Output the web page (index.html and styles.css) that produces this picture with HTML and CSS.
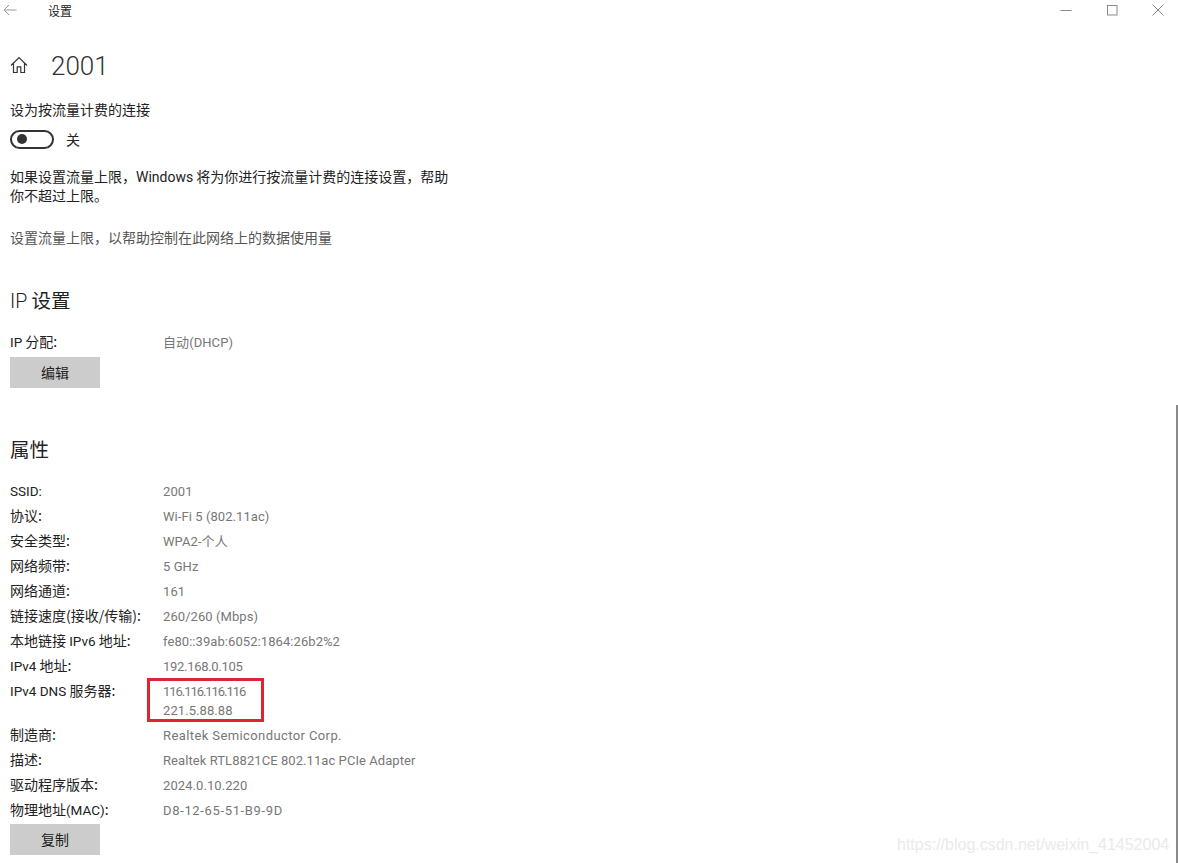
FILE: index.html
```html
<!DOCTYPE html>
<html lang="zh-CN">
<head>
<meta charset="utf-8">
<title>设置</title>
<link rel="stylesheet" href="styles.css">
</head>
<body>
<header class="titlebar">
  <div class="titlebar-left">
    <svg class="back" width="14" height="12" viewBox="0 0 14 12"><path d="M6 1L1 6L6 11M1 6H13.5" fill="none" stroke="#9a9a9a" stroke-width="1"/></svg>
    <span class="app-name">设置</span>
  </div>
  <div class="win-controls">
    <svg width="12" height="12" viewBox="0 0 12 12"><path d="M0.5 6.5H11.5" stroke="#8a8a8a" stroke-width="1"/></svg>
    <svg width="12" height="12" viewBox="0 0 12 12"><rect x="1.5" y="1.5" width="9.5" height="9.5" fill="none" stroke="#8a8a8a" stroke-width="1"/></svg>
    <svg width="12" height="12" viewBox="0 0 12 12"><path d="M0.5 0.5L11.5 11.5M11.5 0.5L0.5 11.5" stroke="#8a8a8a" stroke-width="1"/></svg>
  </div>
</header>
<main class="page">
  <div class="page-head">
    <svg width="18" height="18" viewBox="0 0 18 18"><path d="M1 9.5L9 1.6L17 9.5M3.5 7.3V16.5H7.2V10.8H10.8V16.5H14.5V7.3" fill="none" stroke="#333" stroke-width="1.2"/></svg>
    <h1 class="page-title">2001</h1>
  </div>
  <p class="label metered">设为按流量计费的连接</p>
  <div class="toggle-row">
    <span class="toggle"><span class="knob"></span></span>
    <span class="toggle-text">关</span>
  </div>
  <p class="para">如果设置流量上限，<span class="lat">Windows</span> 将为你进行按流量计费的连接设置，帮助<br>你不超过上限。</p>
  <p class="link">设置流量上限，以帮助控制在此网络上的数据使用量</p>

  <h2 class="section ip-title"><span class="lat-h">IP</span> 设置</h2>
  <div class="ip-row">
    <span class="key"><span class="lat">IP</span> 分配:</span>
    <span class="val">自动(DHCP)</span>
  </div>
  <button class="btn">编辑</button>

  <h2 class="section prop-title">属性</h2>
  <div class="props">
    <span class="key"><span class="lat">SSID:</span></span><span class="val">2001</span>
    <span class="key">协议:</span><span class="val">Wi-Fi 5 (802.11ac)</span>
    <span class="key">安全类型:</span><span class="val">WPA2-个人</span>
    <span class="key">网络频带:</span><span class="val">5 GHz</span>
    <span class="key">网络通道:</span><span class="val">161</span>
    <span class="key">链接速度(接收/传输):</span><span class="val">260/260 (Mbps)</span>
    <span class="key">本地链接 <span class="lat">IPv6</span> 地址:</span><span class="val">fe80::39ab:6052:1864:26b2%2</span>
    <span class="key"><span class="lat">IPv4</span> 地址:</span><span class="val tight">192.168.0.105</span>
    <span class="key"><span class="lat">IPv4 DNS</span> 服务器:</span><span class="val dns"><span class="ones">116.116.116.116</span><br>221.5.88.88<span class="redbox"></span></span>
    <span class="key">制造商:</span><span class="val wide">Realtek Semiconductor Corp.</span>
    <span class="key">描述:</span><span class="val">Realtek RTL8821CE 802.11ac PCIe Adapter</span>
    <span class="key">驱动程序版本:</span><span class="val">2024.0.10.220</span>
    <span class="key">物理地址<span class="lat">(MAC)</span>:</span><span class="val mac">D8-12-65-51-B9-9D</span>
  </div>
  <button class="btn">复制</button>
</main>
<div class="scroll-line"></div>
<div class="watermark">https://blog.csdn.net/weixin_41452004</div>
</body>
</html>
```
FILE: styles.css
```css
* { box-sizing: border-box; }
html, body { margin: 0; height: 863px; overflow: hidden; background: #fff; }
body {
  position: relative;
  font-family: "Noto Sans CJK SC", Roboto, sans-serif;
  font-size: 14px;
  line-height: 19px;
  color: #222;
}
.titlebar { height: 20px; display: flex; justify-content: space-between; align-items: center; }
.titlebar-left { display: flex; align-items: center; padding-left: 3px; }
.back { display: block; }
.app-name { margin-left: 31px; font-size: 12px; color: #222; }
.win-controls { display: flex; gap: 34px; padding-right: 14px; }
.win-controls svg { display: block; }
.page { padding-left: 10px; }
.page-head { margin-top: 26px; height: 40px; display: flex; align-items: center; gap: 23px; }
.page-head svg { display: block; margin-bottom: 2px; }
.page-title { margin: 0; font: 300 26px/40px Roboto, sans-serif; color: #333; }
p { margin: 0; }
.metered { margin-top: 13.5px; }
.toggle-row { margin-top: 11px; height: 19px; display: flex; align-items: center; gap: 12px; }
.toggle { width: 44px; height: 19px; border: 2px solid #333; border-radius: 10px; display: flex; align-items: center; padding-left: 5px; }
.knob { width: 10px; height: 10px; border-radius: 50%; background: #333; }
.para { margin-top: 18.5px; }
.link { margin-top: 23px; color: #555; }
.lat { font-family: Roboto, sans-serif; font-size: 13.5px; line-height: 1; }
.para .lat { font-size: 14px; }
.lat-h { font-family: Roboto, sans-serif; font-weight: 300; line-height: 1; }
.section { margin: 0; font-weight: 400; font-size: 19.5px; line-height: 28px; color: #222; }
.ip-title { margin-top: 38.5px; }
.ip-row { margin-top: 18.5px; display: grid; grid-template-columns: 153px 1fr; }
.val { font-family: Roboto, "Noto Sans CJK SC", sans-serif; font-size: 13px; letter-spacing: 0.07px; color: #777; padding-top: 1px; margin-bottom: -1px; }
.tight { letter-spacing: -0.3px; }
.ones { letter-spacing: -1.05px; }
.wide { letter-spacing: 0.4px; }
.mac { letter-spacing: 0.65px; }
.btn {
  display: block; width: 90px; height: 31px; padding: 0; border: 0;
  background: #ccc; color: #222;
  font: 14px/31px "Noto Sans CJK SC", sans-serif;
}
.ip-row + .btn { margin-top: 5.5px; }
.prop-title { margin-top: 47px; }
.props { margin-top: 18.5px; display: grid; grid-template-columns: 153px 1fr; row-gap: 6px; padding-bottom: 4.5px; }
.dns { position: relative; }
.redbox { position: absolute; left: -16px; top: -3.5px; width: 117px; height: 44px; border: 3px solid #dc2433; }
.scroll-line { position: absolute; right: 0; top: 405px; bottom: 0; width: 2px; background: #8a8a8a; }
.watermark { position: absolute; left: 897px; top: 834px; font: 16px/22px "Liberation Sans", sans-serif; color: #eaeaea; white-space: nowrap; }
```
